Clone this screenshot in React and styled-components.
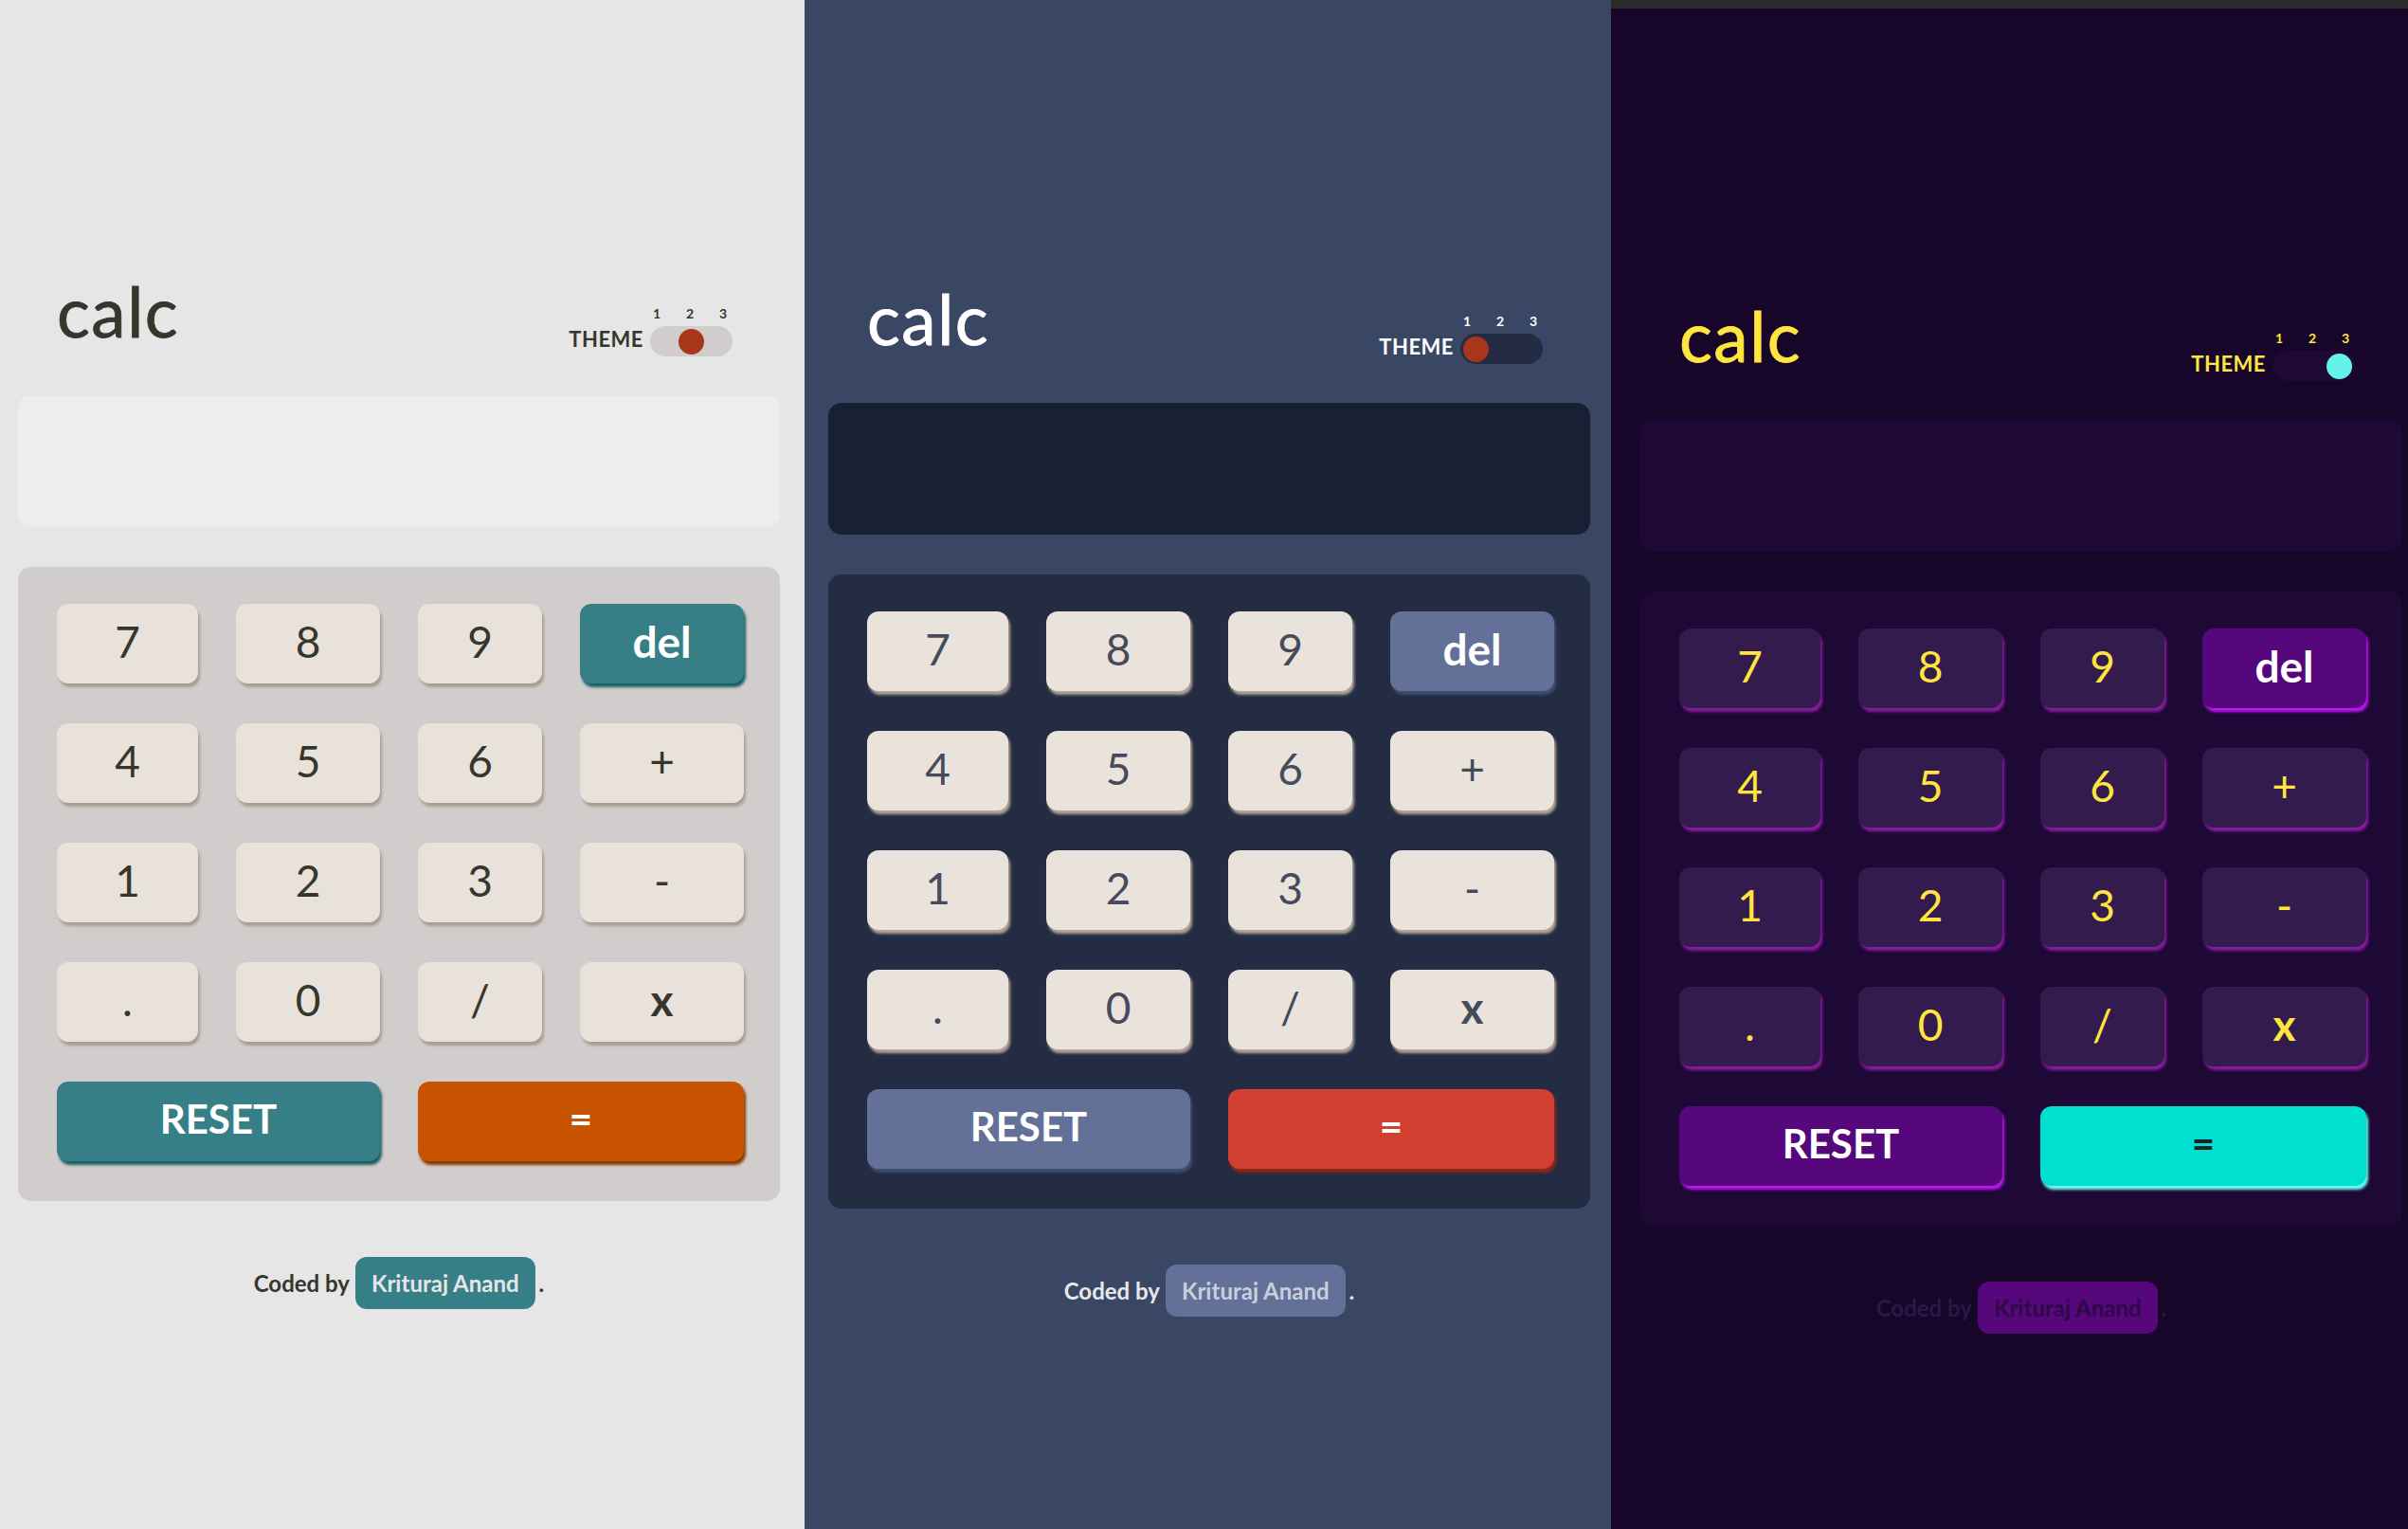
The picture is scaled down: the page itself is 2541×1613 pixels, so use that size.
import React from 'react'
import styled, { createGlobalStyle } from 'styled-components'

const GlobalStyle = createGlobalStyle`
  * {
    box-sizing: border-box;
  }

  body {
    margin: 0;
    overflow: hidden;
    font-family: Lato, "Noto Sans", sans-serif;
  }
`

const themes = [
  {
    bg: '#e6e6e6',
    pad: '#d2cdcd',
    screen: '#ededed',
    title: '#36362c',
    key: '#e8e2db',
    keyText: '#36362c',
    keyShadow: '#a79e91',
    fn: '#377f86',
    fnShadow: '#1b5f65',
    fnText: '#ffffff',
    eq: '#c85402',
    eqShadow: '#893901',
    eqText: '#ffffff',
    knob: '#a8361a',
    credit: '#36362c',
    badge: '#377f86',
    badgeText: '#e6e6e6',
  },
  {
    bg: '#3a4764',
    pad: '#232c43',
    screen: '#182034',
    title: '#ffffff',
    key: '#eae3dc',
    keyText: '#444b5a',
    keyShadow: '#b4a597',
    fn: '#637097',
    fnShadow: '#404e72',
    fnText: '#ffffff',
    eq: '#d03f2f',
    eqShadow: '#93261a',
    eqText: '#ffffff',
    knob: '#a8361a',
    credit: '#e8e8e8',
    badge: '#637097',
    badgeText: '#c9cedb',
  },
  {
    bg: '#17062a',
    pad: '#1e0936',
    screen: '#1e0936',
    title: '#ffe53d',
    key: '#331c4d',
    keyText: '#ffe53d',
    keyShadow: '#881c9e',
    fn: '#56077c',
    fnShadow: '#be15f4',
    fnText: '#ffffff',
    eq: '#00e0d1',
    eqShadow: '#6cf9f1',
    eqText: '#1a2327',
    knob: '#64f3ea',
    credit: '#2d1748',
    badge: '#56077c',
    badgeText: '#2c0a45',
  },
]

const panels = [
  { theme: 0, width: 849, left: 19, top: 292, knob: 'center' },
  { theme: 1, width: 851, left: 25, top: 300, knob: 'flex-start' },
  { theme: 2, width: 841, left: 31, top: 309, knob: 'flex-end', bar: true },
]

const keys = [
  ['7'], ['8'], ['9'], ['del', 'fn'],
  ['4'], ['5'], ['6'], ['+'],
  ['1'], ['2'], ['3'], ['-'],
  ['.'], ['0'], ['/'], ['x'],
  ['RESET', 'fn', true], ['=', 'eq', true],
]

const Page = styled.main`
  display: flex;
  width: 2541px;
  height: 1613px;
`

const Panel = styled.section`
  flex: none;
  width: ${p => p.$w}px;
  height: 100%;
  background: ${p => p.$t.bg};
  display: flex;
  flex-direction: column;
`

const TopBar = styled.div`
  height: 9px;
  background: #2a2a2a;
`

const Calculator = styled.div`
  width: 804px;
  margin-left: ${p => p.$left}px;
  padding-top: ${p => p.$top}px;
`

const Header = styled.header`
  display: flex;
  justify-content: space-between;
  align-items: flex-end;
  height: 84px;
  padding: 0 49px 0 41px;
  margin-bottom: 41px;
`

const Logo = styled.h1`
  margin: 0 0 12px;
  font-size: 73px;
  line-height: 72px;
  font-weight: 400;
  letter-spacing: 1.5px;
  color: ${p => p.$t.title};
  -webkit-text-stroke: 0.8px ${p => p.$t.title};
`

const Switch = styled.div`
  display: flex;
  align-items: flex-end;
  color: ${p => p.$t.title};
  font-weight: 700;
`

const SwitchLabel = styled.span`
  font-size: 22px;
  line-height: 22px;
  margin: 0 7px 7px 0;
  letter-spacing: 0.5px;
`

const SwitchControl = styled.div`
  display: flex;
  flex-direction: column;
`

const Numbers = styled.div`
  display: flex;
  justify-content: center;
  gap: 21px;
  padding-right: 4px;
  margin-bottom: 6px;
  font-size: 14px;
  line-height: 14px;

  span {
    width: 14px;
    text-align: center;
  }
`

const Track = styled.div`
  width: 87px;
  height: 32px;
  border-radius: 16px;
  padding: 0 3px;
  background: ${p => p.$t.pad};
  display: flex;
  align-items: center;
  justify-content: ${p => p.$pos};
`

const Knob = styled.div`
  width: 27px;
  height: 27px;
  border-radius: 50%;
  background: ${p => p.$t.knob};
`

const Screen = styled.div`
  height: 139px;
  border-radius: 14px;
  background: ${p => p.$t.screen};
  margin-bottom: 42px;
`

const Keypad = styled.div`
  display: grid;
  grid-template-columns: 149px 152px 131px 173px;
  grid-auto-rows: 84px;
  column-gap: 40px;
  row-gap: 42px;
  padding: 39px 37px 42px 41px;
  border-radius: 14px;
  background: ${p => p.$t.pad};
`

const keyColors = (t, kind) => {
  if (kind === 'fn') return [t.fn, t.fnShadow, t.fnText]
  if (kind === 'eq') return [t.eq, t.eqShadow, t.eqText]
  return [t.key, t.keyShadow, t.keyText]
}

const Key = styled.button`
  grid-column: ${p => (p.$wide ? 'span 2' : 'auto')};
  display: flex;
  align-items: center;
  justify-content: center;
  padding: 0 0 6px;
  border: none;
  border-radius: 12px;
  font-family: inherit;
  font-size: ${p => (p.$wide ? '42px' : '46px')};
  font-weight: ${p => (p.$kind || p.$bold ? 700 : 400)};
  background: ${p => keyColors(p.$t, p.$kind)[0]};
  box-shadow: 2px 4px 3px ${p => keyColors(p.$t, p.$kind)[1]};
  color: ${p => keyColors(p.$t, p.$kind)[2]};
`

const Footer = styled.footer`
  display: flex;
  justify-content: center;
  align-items: center;
  margin-top: 59px;
  font-size: 24px;
  font-weight: 700;
  color: ${p => p.$t.credit};
`

const Badge = styled.span`
  display: flex;
  align-items: center;
  height: 55px;
  padding: 0 17px;
  margin: 0 4px 0 6px;
  border-radius: 12px;
  background: ${p => p.$t.badge};
  color: ${p => p.$t.badgeText};
`

function Calc({ panel }) {
  const t = themes[panel.theme]
  return (
    <Panel $w={panel.width} $t={t}>
      {panel.bar && <TopBar />}
      <Calculator $left={panel.left} $top={panel.top}>
        <Header>
          <Logo $t={t}>calc</Logo>
          <Switch $t={t}>
            <SwitchLabel>THEME</SwitchLabel>
            <SwitchControl>
              <Numbers>
                <span>1</span>
                <span>2</span>
                <span>3</span>
              </Numbers>
              <Track $t={t} $pos={panel.knob}>
                <Knob $t={t} />
              </Track>
            </SwitchControl>
          </Switch>
        </Header>
        <Screen $t={t} />
        <Keypad $t={t}>
          {keys.map(([label, kind, wide]) => (
            <Key key={label} $t={t} $kind={kind} $wide={wide} $bold={label === 'x'}>
              {label}
            </Key>
          ))}
        </Keypad>
        <Footer $t={t}>
          Coded by
          <Badge $t={t}>Krituraj Anand</Badge>.
        </Footer>
      </Calculator>
    </Panel>
  )
}

export default function App() {
  return (
    <>
      <GlobalStyle />
      <Page>
        {panels.map(p => (
          <Calc key={p.theme} panel={p} />
        ))}
      </Page>
    </>
  )
}
